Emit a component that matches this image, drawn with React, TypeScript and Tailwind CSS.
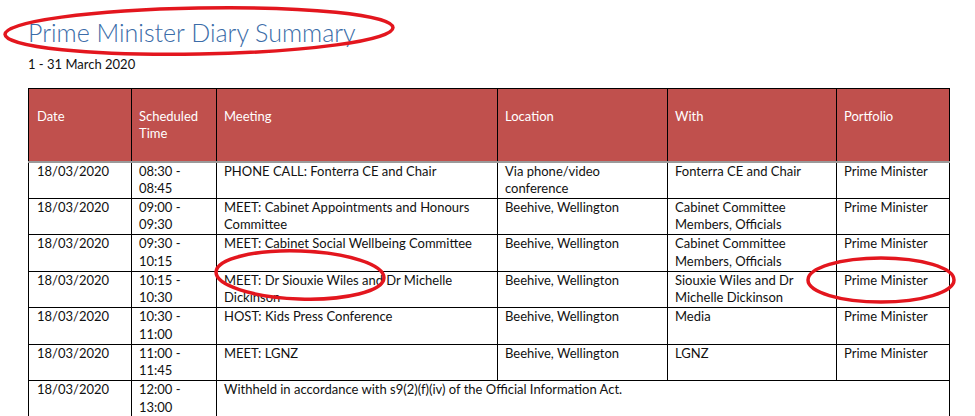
import React from 'react';

const rows = [
  { date: '18/03/2020', time: ['08:30 -', '08:45'], meeting: 'PHONE CALL: Fonterra CE and Chair', location: 'Via phone/video conference', with: 'Fonterra CE and Chair', portfolio: 'Prime Minister' },
  { date: '18/03/2020', time: ['09:00 -', '09:30'], meeting: 'MEET: Cabinet Appointments and Honours Committee', location: 'Beehive, Wellington', with: 'Cabinet Committee Members, Officials', portfolio: 'Prime Minister' },
  { date: '18/03/2020', time: ['09:30 -', '10:15'], meeting: 'MEET: Cabinet Social Wellbeing Committee', location: 'Beehive, Wellington', with: 'Cabinet Committee Members, Officials', portfolio: 'Prime Minister' },
  { date: '18/03/2020', time: ['10:15 -', '10:30'], meeting: 'MEET: Dr Siouxie Wiles and Dr Michelle Dickinson', location: 'Beehive, Wellington', with: 'Siouxie Wiles and Dr Michelle Dickinson', portfolio: 'Prime Minister' },
  { date: '18/03/2020', time: ['10:30 -', '11:00'], meeting: 'HOST: Kids Press Conference', location: 'Beehive, Wellington', with: 'Media', portfolio: 'Prime Minister' },
  { date: '18/03/2020', time: ['11:00 -', '11:45'], meeting: 'MEET: LGNZ', location: 'Beehive, Wellington', with: 'LGNZ', portfolio: 'Prime Minister' },
];

const td = 'border border-black align-top pl-[7px] pr-[10px] py-0 leading-[17.5px]';
const th = 'border border-black align-top text-left font-normal pl-[7px] pt-[19px] leading-[17px]';

export default function App() {
  return (
    <div className="relative w-[975px] h-[416px] overflow-hidden bg-white text-[#111] font-['Lato','Liberation_Sans',sans-serif] text-[13px] leading-[18px]">
      <div className="pl-[28px] pt-[17px]">
        <h1 className="text-[25px] leading-[30px] font-light text-[#3b6ca8]">Prime Minister Diary Summary</h1>
        <p className="mt-[9px] text-[13px] leading-[16px]">1 - 31 March 2020</p>
      </div>

      <table className="ml-[28px] mt-[16px] border-collapse table-fixed w-[921px]">
        <colgroup>
          <col className="w-[103px]" />
          <col className="w-[85px]" />
          <col className="w-[281px]" />
          <col className="w-[170px]" />
          <col className="w-[169px]" />
          <col className="w-[113px]" />
        </colgroup>
        <thead>
          <tr className="h-[73px] bg-[#c0504d] text-white border-b-2 border-b-[#9a9a9a]">
            <th className={th + ' pl-[8px]'}>Date</th>
            <th className={th}>Scheduled<br />Time</th>
            <th className={th}>Meeting</th>
            <th className={th}>Location</th>
            <th className={th}>With</th>
            <th className={th}>Portfolio</th>
          </tr>
        </thead>
        <tbody>
          {rows.map((r, i) => (
            <tr key={i} className="h-[36.5px]">
              <td className={td + ' pl-[8px]'}>{r.date}</td>
              <td className={td}>{r.time[0]}<br />{r.time[1]}</td>
              <td className={td}>{r.meeting}</td>
              <td className={td}>{r.location}</td>
              <td className={td}>{r.with}</td>
              <td className={td}>{r.portfolio}</td>
            </tr>
          ))}
          <tr className="h-[40px]">
            <td className={td + ' pl-[8px]'}>18/03/2020</td>
            <td className={td}>12:00 -<br />13:00</td>
            <td className={td} colSpan={4}>Withheld in accordance with s9(2)(f)(iv) of the Official Information Act.</td>
          </tr>
        </tbody>
      </table>

      {/* red hand-drawn circles over the scan */}
      <svg className="absolute inset-0 pointer-events-none" width="975" height="416" viewBox="0 0 975 416">
        <g fill="none" stroke="#e3161e" strokeWidth="3.5">
          <ellipse cx="199" cy="31" rx="194" ry="23" transform="rotate(-1 199 31)" />
          <ellipse cx="300" cy="275" rx="84" ry="24" transform="rotate(2 300 275)" />
          <ellipse cx="881" cy="280" rx="73" ry="22" />
        </g>
      </svg>
    </div>
  );
}
